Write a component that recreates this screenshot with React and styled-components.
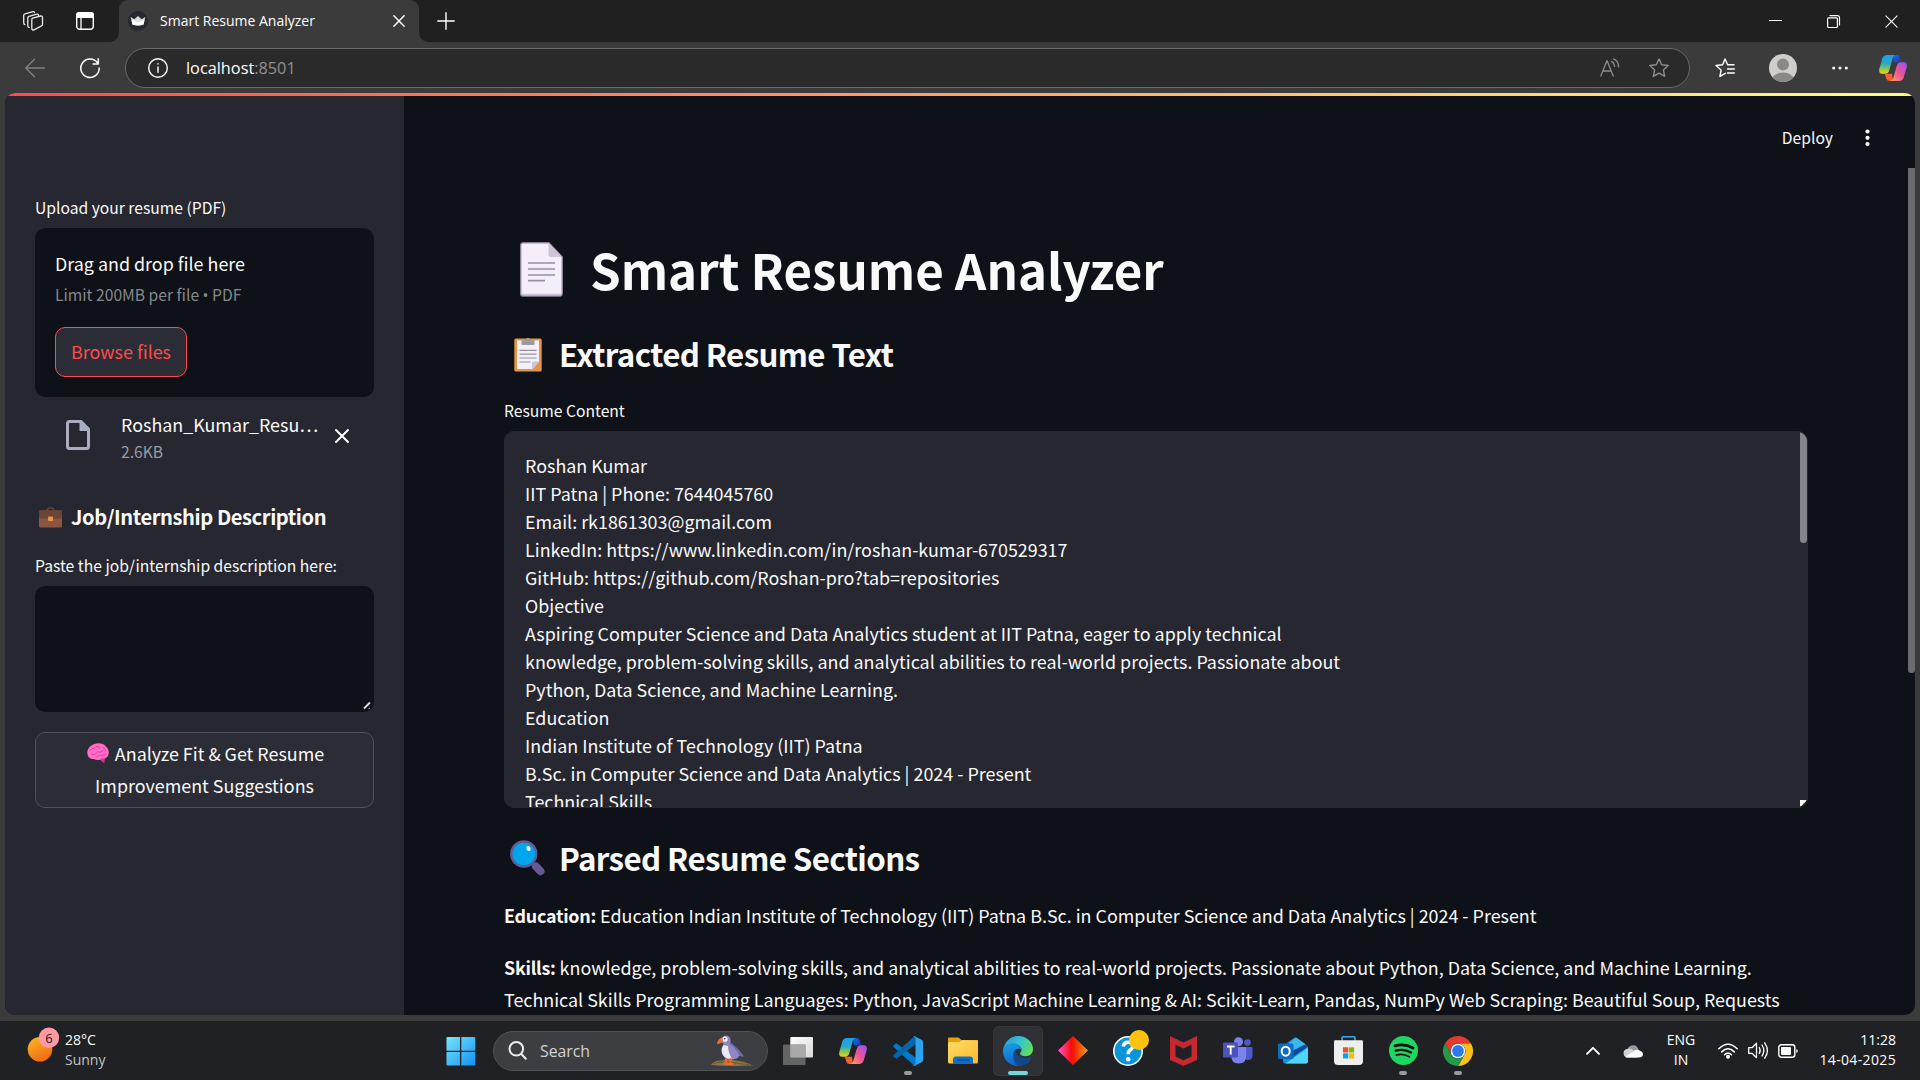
import React from "react";
import styled, { createGlobalStyle } from "styled-components";

const GlobalStyle = createGlobalStyle`
  * { box-sizing: border-box; }
  html, body { margin: 0; padding: 0; background: #202024; overflow: hidden; }
  p, h1, h2, h3 { margin: 0; }
`;

const sans = `"Noto Sans CJK SC", "Noto Sans", sans-serif`;
const ui = `"Open Sans", "Noto Sans", sans-serif`;

const Screen = styled.div`
  width: 1920px;
  height: 1080px;
  display: flex;
  flex-direction: column;
  background: #3b3b3b;
  font-family: ${ui};
  color: #fff;
  overflow: hidden;
`;

const Icon = styled.svg`
  display: block;
  flex: none;
  overflow: visible;
`;

/* ---------- browser chrome ---------- */

const TabStrip = styled.div`
  height: 42px;
  flex: none;
  display: flex;
  align-items: center;
  background: #202020;
  padding-left: 22px;
`;
const StripTools = styled.div`
  width: 97px;
  display: flex;
  align-items: center;
  gap: 32px;
`;
const Tab = styled.div`
  position: relative;
  width: 300px;
  height: 42px;
  display: flex;
  align-items: center;
  padding: 0 14px 0 9px;
  gap: 12px;
  background: #3b3b3b;
  border-radius: 9px 9px 0 0;
  &::before, &::after {
    content: "";
    position: absolute;
    bottom: 0;
    width: 9px;
    height: 9px;
  }
  &::before {
    left: -9px;
    background: radial-gradient(circle at 0 0, #202020 8.5px, #3b3b3b 9px);
  }
  &::after {
    right: -9px;
    background: radial-gradient(circle at 9px 0, #202020 8.5px, #3b3b3b 9px);
  }
`;
const TabTitle = styled.span`
  flex: 1;
  font-size: 14px;
  line-height: 20px;
  white-space: nowrap;
  padding-bottom: 1px;
`;
const NewTab = styled.div`
  margin-left: 18px;
  flex: 1;
`;
const WindowButtons = styled.div`
  display: flex;
  align-items: center;
  gap: 45px;
  padding-right: 22px;
`;

const Toolbar = styled.div`
  height: 51px;
  flex: none;
  display: flex;
  align-items: center;
  padding: 0 13px 0 25px;
`;
const NavIcons = styled.div`
  display: flex;
  width: 100px;
  gap: 35px;
`;
const AddressBar = styled.div`
  width: 1565px;
  height: 40px;
  display: flex;
  align-items: center;
  border: 1px solid #6a6a6a;
  border-radius: 20px;
  background: #2a2a2a;
  padding: 0 20px 0 22px;
`;
const Url = styled.span`
  flex: 1;
  margin-left: 18px;
  font-size: 16.3px;
  line-height: 24px;
  padding-top: 1px;
  span { color: #8f8f8f; }
`;
const AddressActions = styled.div`
  display: flex;
  gap: 29px;
`;
const ToolbarActions = styled.div`
  flex: 1;
  display: grid;
  grid-template-columns: 54px 63px 47px 28px;
  align-items: center;
  padding-left: 25px;
`;

/* ---------- page ---------- */

const Page = styled.div`
  width: 1910px;
  height: 922px;
  flex: none;
  margin-left: 5px;
  border-radius: 10px;
  overflow: hidden;
  display: flex;
  flex-direction: column;
  background: #0e1117;
  font-family: ${sans};
  color: #fafafa;
`;
const Decoration = styled.div`
  height: 3px;
  flex: none;
  background: linear-gradient(90deg, #ff4b4b, #fffd80);
`;
const PageBody = styled.div`
  flex: 1;
  display: flex;
  min-height: 0;
`;
const Sidebar = styled.aside`
  width: 399px;
  flex: none;
  background: #262730;
  padding: 99px 30px 0;
`;
const Label = styled.div`
  padding-top: 1px;
  font-size: 15.67px;
  line-height: 24px;
  white-space: nowrap;
  margin-bottom: 8px;
`;
const Dropzone = styled.div`
  height: 169px;
  padding: 19px 20px 20px;
  border-radius: 10px;
  background: #0e1117;
`;
const DropTitle = styled.div`
  font-size: 17.9px;
  line-height: 32px;
`;
const Hint = styled.div`
  margin-top: 4px;
  font-size: 15.67px;
  line-height: 24px;
  color: #86888b;
`;
const Bullet = styled.span`
  font-family: "Open Sans", sans-serif;
  line-height: 1;
`;
const Button = styled.button`
  display: flex;
  flex-direction: column;
  align-items: center;
  width: ${(p) => p.$width};
  height: ${(p) => p.$height};
  margin: ${(p) => p.$top} 0 0;
  padding: ${(p) => p.$pad} 0 0;
  border: 1px solid ${(p) => (p.$active ? "#ff4b4b" : "#50515a")};
  border-radius: 10px;
  background: #2b2c36;
  color: ${(p) => (p.$active ? "#ff4b4b" : "#fafafa")};
  font-family: ${sans};
  font-size: 17.9px;
  line-height: 32px;
  white-space: nowrap;
`;
const ButtonLine = styled.span`
  display: flex;
  align-items: center;
  gap: 6px;
  padding-left: ${(p) => p.$shift || "0"};
`;
const FileRow = styled.div`
  display: flex;
  align-items: flex-start;
  margin-top: 11px;
  padding: 0 24px 0 31px;
`;
const FileIconBox = styled.div`
  width: 55px;
  padding-top: 12px;
`;
const FileText = styled.div`
  width: 214px;
  flex: none;
`;
const FileName = styled.div`
  font-size: 17.9px;
  line-height: 32px;
  white-space: nowrap;
`;
const FileSize = styled.div`
  margin-top: 2px;
  font-size: 15.67px;
  line-height: 20px;
  color: #9a9ba0;
`;
const RemoveBox = styled.div`
  padding-top: 21px;
`;
const SideHeading = styled.h3`
  display: flex;
  align-items: center;
  gap: 9px;
  margin: 41px 0 22px;
  padding-left: 4px;
  font-size: 20.1px;
  line-height: 28px;
  font-weight: 600;
  letter-spacing: -0.41px;
  white-space: nowrap;
`;
const JobInput = styled.div`
  height: 126px;
  display: flex;
  align-items: flex-end;
  justify-content: flex-end;
  padding: 2px;
  border-radius: 10px;
  background: #0e1117;
`;

const Main = styled.main`
  position: relative;
  flex: 1;
  min-width: 0;
  overflow: hidden;
`;
const Header = styled.header`
  height: 82px;
  display: flex;
  align-items: center;
  justify-content: flex-end;
  gap: 31px;
  padding: 2px 44px 0 0;
  font-size: 15.67px;
  line-height: 24px;
`;
const Content = styled.div`
  width: 1304px;
  margin: 58px 0 0 100px;
`;
const Title = styled.h1`
  display: flex;
  align-items: center;
  height: 66px;
  padding-left: 16px;
  gap: 27px;
  font-size: 49.2px;
  line-height: 66px;
  font-weight: 700;
  white-space: nowrap;
`;
const Heading = styled.h2`
  display: flex;
  align-items: center;
  height: 42px;
  margin: ${(p) => p.$margin};
  font-size: 31.3px;
  line-height: 42px;
  font-weight: 600;
  letter-spacing: -0.62px;
  white-space: nowrap;
`;
const HeadingIcon = styled.span`
  width: 55px;
  padding-left: ${(p) => p.$inset};
`;
const ResumeBox = styled.div`
  position: relative;
  height: 377px;
  padding: 19px 20px 0;
  border: 1px solid #262730;
  border-radius: 10px;
  background: #262730;
  overflow: hidden;
  font-size: 17.9px;
  line-height: 28px;
  white-space: pre;
`;
const Thumb = styled.div`
  position: absolute;
  right: 0;
  top: ${(p) => p.$top};
  width: 7px;
  height: ${(p) => p.$height};
  border-radius: ${(p) => p.$radius};
  background: ${(p) => p.$color};
`;
const Corner = styled.div`
  position: absolute;
  right: 0;
  bottom: 0;
  width: 7px;
  height: 7px;
`;
const Para = styled.p`
  margin-bottom: 20px;
  font-size: 17.9px;
  line-height: 32px;
  white-space: nowrap;
  b { font-weight: 700; letter-spacing: -0.25px; }
`;

/* ---------- taskbar ---------- */

const Taskbar = styled.footer`
  height: 59px;
  flex: none;
  margin-top: 6px;
  display: flex;
  align-items: center;
  background: #202125;
`;
const Weather = styled.div`
  width: 436px;
  display: flex;
  align-items: center;
  gap: 6px;
  padding-left: 27px;
`;
const Lines = styled.div`
  width: ${(p) => p.$width || "auto"};
  text-align: ${(p) => p.$align || "left"};
  padding-bottom: 2px;
  font-size: 14px;
  line-height: 20px;
  white-space: nowrap;
`;
const Dim = styled.div`
  color: #c4c4c6;
`;
const DateText = styled.div`
  letter-spacing: 0.35px;
`;
const Cell = styled.div`
  position: relative;
  width: 50px;
  height: 50px;
  flex: none;
  display: flex;
  align-items: center;
  justify-content: center;
  border-radius: 6px;
  background: ${(p) => (p.$active ? "#303135" : "transparent")};
  box-shadow: ${(p) => (p.$active ? "inset 0 0 0 1px #37383c" : "none")};
  &::after {
    content: "";
    position: absolute;
    bottom: 1px;
    width: ${(p) => (p.$active ? "20px" : p.$running ? "8px" : "0")};
    height: 4px;
    border-radius: 2px;
    background: ${(p) => (p.$active ? "#76d6dc" : "#9a9a9d")};
  }
`;
const SearchBox = styled.div`
  width: 275px;
  height: 40px;
  margin: 0 5px 0 7px;
  display: flex;
  align-items: center;
  padding: 0 14px 0 14px;
  border: 1px solid #505155;
  border-radius: 20px;
  background: #3d3e42;
`;
const SearchText = styled.span`
  flex: 1;
  margin-left: 13px;
  color: #d2d2d4;
  font-size: 15.8px;
  line-height: 24px;
`;
const Apps = styled.div`
  display: flex;
  gap: 5px;
`;
const Tray = styled.div`
  flex: 1;
  display: flex;
  align-items: center;
  justify-content: flex-end;
  padding-right: 24px;
`;
const TrayGap = styled.div`
  width: ${(p) => p.$w};
  flex: none;
`;

const line = (w = 1.3, c = "#fff") => ({
  fill: "none",
  stroke: c,
  strokeWidth: w,
  strokeLinecap: "round",
  strokeLinejoin: "round",
});

const Workspaces = () => (
  <Icon width="22" height="22" viewBox="0 0 22 22" {...line(1.3, "#e8e8e8")}>
    <path d="M10.6 8.2 18.8 6c.9-.2 1.7.4 1.7 1.300v7.200c0 .7-.4 1.200-1 1.400l-7.500 3.900c-1 .5-2.200 0-2.200-1.300V9.500c0-.6.2-1.100.8-1.300Z" />
    <path d="M16.500 5.500c0-1-.8-1.600-1.700-1.300L7 6.300c-.7.200-1.200.8-1.200 1.500v8.300c0 .8.600 1.300 1.300 1.300" />
    <path d="M12.500 2.600c-.1-.8-.8-1.200-1.600-1L3 3.900c-.8.200-1.300.8-1.300 1.600v7.600c0 .8.500 1.300 1.200 1.400" />
  </Icon>
);
const VerticalTabs = () => (
  <Icon width="18" height="18" viewBox="0 0 18 18">
    <rect x=".7" y=".7" width="16.600" height="16.600" rx="3" {...line(1.4)} />
    <path d="M0 6V3a3 3 0 0 1 3-3h12a3 3 0 0 1 3 3v3Z" fill="#fff" />
    <path d="M5 5v12" {...line(1.3)} />
  </Icon>
);
const Crown = () => (
  <Icon width="20" height="20" viewBox="0 0 20 20">
    <circle cx="10" cy="10" r="10" fill="#262730" />
    <path d="M2.600 6 6.300 8.200 10 5l3.700 3.200L17.400 6 15.500 13.500Q10 15.500 4.500 13.500Z" fill="#dcdcdc" />
    <path d="M3.500 9 10 11l6.500-2-1 4.500Q10 15.500 4.500 13.500Z" fill="#fff" />
  </Icon>
);
const Cross = ({ size, w = 1.4 }) => (
  <Icon width={size} height={size} viewBox="0 0 14 14" {...line(w)}>
    <path d="m1 1 12 12M13 1 1 13" />
  </Icon>
);

const Copilot = ({ id }) => (
  <Icon width="28" height="26" viewBox="0 0 28 26">
    <defs>
      <linearGradient id={id + "a"} x1="0" y1="0" x2="0" y2="1">
        <stop offset="0" stopColor="#1f9df0" /><stop offset=".45" stopColor="#2aa8c8" />
        <stop offset=".75" stopColor="#8cc84a" /><stop offset="1" stopColor="#f5d30c" />
      </linearGradient>
      <linearGradient id={id + "b"} x1="1" y1="0" x2="0" y2="1">
        <stop offset="0" stopColor="#8f55f5" /><stop offset=".5" stopColor="#ec5299" />
        <stop offset="1" stopColor="#ffa25a" />
      </linearGradient>
      <linearGradient id={id + "c"} x1="0" y1="0" x2="1" y2="1">
        <stop offset="0" stopColor="#1a6fe0" /><stop offset="1" stopColor="#1636b8" />
      </linearGradient>
    </defs>
    <path d="M14 0h3.500c1.500 0 2.600.8 3.100 2.200l1.600 5H15Z" fill={`url(#${id}c)`} />
    <path d="M14 26h-3.500c-1.500 0-2.600-.8-3.100-2.200l-1.600-5H13Z" fill="#f4602f" />
    <path d="M8 0h8.500c-1.500.4-2.300 1.500-2.800 3.200L10.300 15c-.7 2.500-1.800 3.800-4.200 3.800H3.200C.8 18.800-.4 16.800.2 14.300L3.300 3.500C4 1.200 5.500 0 8 0Z" fill={`url(#${id}a)`} />
    <path d="M20 26h-8.500c1.500-.4 2.300-1.500 2.800-3.200L17.700 11c.7-2.500 1.800-3.800 4.200-3.800h2.900c2.400 0 3.600 2 3 4.500l-3.100 10.800C24 24.800 22.500 26 20 26Z" fill={`url(#${id}b)`} />
  </Icon>
);

const ReadAloud = () => (
  <Icon width="20" height="19" viewBox="0 0 20 19" {...line(1.3, "#8c8c8c")}>
    <path d="M.8 18 7 2.500 13.200 18M3 13h8" />
    <path d="M11.500 3.600c2 .8 3 2.600 3 5M13.500.9c3.300 1.300 5.100 4.300 5.100 8" />
  </Icon>
);
const star = "M10 .9 12.700 6.700 19.200 7.500 14.400 12 15.700 18.400 10 15.200 4.300 18.400 5.600 12 .8 7.500 7.300 6.700Z";
const Star = () => (
  <Icon width="20" height="20" viewBox="0 0 20 20" {...line(1.4, "#8c8c8c")}><path d={star} /></Icon>
);
const Favorites = () => (
  <Icon width="20" height="20" viewBox="0 0 20 20" {...line(1.4)}>
    <path d="M10.300 15.300 4.900 18.400 6.100 12 1 7.500 7.600 6.700 10 1 12.600 6.700H19M12.500 11H19.300M12.500 15H19.300" />
  </Icon>
);
const Avatar = () => (
  <Icon width="28" height="28" viewBox="0 0 28 28">
    <defs><clipPath id="av"><circle cx="14" cy="14" r="14" /></clipPath></defs>
    <g clipPath="url(#av)">
      <rect width="28" height="28" fill="#d0cdca" />
      <circle cx="14" cy="10.500" r="6" fill="#8c8885" />
      <ellipse cx="14" cy="25" rx="10.500" ry="6.500" fill="#8c8885" />
    </g>
  </Icon>
);

/* ---------- emoji drawings ---------- */

const PageEmoji = () => (
  <Icon width="43" height="55" viewBox="0 0 43 55">
    <path d="M3 .8h26L42.200 15v36.500c0 1.500-1 2.500-2.500 2.500H3C1.600 54 .8 53 .8 51.700V3C.8 1.700 1.600.8 3 .8Z" fill="#f3eef8" stroke="#9b8fa5" strokeWidth="1.300" />
    <path d="M28.500 1 42.200 15H31c-1.500 0-2.500-1-2.500-2.500Z" fill="#cdc4d6" />
    <path d="M8 21h27M8 27h27M8 33h27M8 38.700h17" stroke="#998fa3" strokeWidth="1.700" />
    <path d="M2 52.500h39" stroke="#cdc4d6" strokeWidth="1.500" />
  </Icon>
);
const ClipboardEmoji = () => (
  <Icon width="28" height="36" viewBox="0 0 28 36">
    <rect x=".3" y="2.500" width="27.400" height="33" rx="1.500" fill="#e19747" />
    <path d="M3 4.500h22v21L18.500 33H4Q3 33 3 32Z" fill="#f3eef8" />
    <path d="M25 25.500h-5.500q-1.500 0-1.500 1.500v6.500Z" fill="#cdc4d6" />
    <path d="M7.500 8V5.500q0-2 2.500-2h1.700a2.400 2.400 0 0 1 4.600 0H18q2.500 0 2.500 2V8q0 1-1 1h-11q-1 0-1-1Z" fill="#9b9b9b" />
    <circle cx="14" cy="3" r="1" fill="#c98a45" />
    <path d="M5.500 14.300h17M5.500 18.200h17M5.500 22h17M5.500 26h11" stroke="#998fa3" strokeWidth="1.200" />
  </Icon>
);
const MagnifierEmoji = () => (
  <Icon width="35" height="36" viewBox="0 0 35 36">
    <path d="M20.500 21.500 30 31" stroke="#635994" strokeWidth="4" />
    <path d="m26 26.500 4.500 4.700" stroke="#635994" strokeWidth="8" strokeLinecap="round" />
    <circle cx="13.800" cy="14" r="12.500" fill="#00a6ed" stroke="#635994" strokeWidth="2.400" />
    <ellipse cx="18.500" cy="8.500" rx="2" ry="2.600" fill="#fff" transform="rotate(-20 18.500 8.500)" />
  </Icon>
);
const BriefcaseEmoji = () => (
  <Icon width="23" height="21" viewBox="0 0 23 21">
    <path d="M8 4C8 1.800 9.200.8 11.500.8S15 1.800 15 4" {...line(1.2, "#6d4534")} />
    <rect x="0" y="3.500" width="23" height="17" rx="1" fill="#8c5543" />
    <path d="M1 3.500h21q1 0 1 1V10q0 1.500-1.500 1.500h-20Q0 11.500 0 10V4.500q0-1 1-1Z" fill="#6d4534" />
    <rect x="9" y="9.500" width="5" height="4.500" rx=".8" fill="#e19747" />
  </Icon>
);
const BrainEmoji = () => (
  <Icon width="22" height="20" viewBox="0 0 22 20">
    <path d="M12 15.500 17.800 14.500 17.500 20Q14.500 19 13.500 17Z" fill="#e6279a" />
    <path d="M9.500.5C13 -.2 17 .8 18.800 3.500 21.500 5.500 22.500 9 21.300 12 20.300 15 17.500 16 15 15.500 12.500 17.500 9 17.500 7 16 3.500 16.300.5 14 .5 11-.5 6.500 3 1.500 9.500.5Z" fill="#ff6dc6" />
    <path d="M3 7.500Q5 5 8 5M9 3.500Q12 3 13 5M5 11.500q3 .5 4.500-1.500M11 9q3 1.500 5-1.500M13 12.500q3 .5 5-1.500M16 4.500q2 .5 2.500 2.500M9.500 14q1.500-.3 2-1.800" {...line(.9, "#ec2fa2")} />
  </Icon>
);

/* ---------- taskbar drawings ---------- */

const WeatherIcon = () => (
  <Icon width="32" height="47" viewBox="0 0 32 47">
    <defs>
      <linearGradient id="sun" x1=".2" y1="0" x2=".7" y2="1">
        <stop offset="0" stopColor="#f9b42a" /><stop offset="1" stopColor="#f2660f" />
      </linearGradient>
    </defs>
    <circle cx="13" cy="22.300" r="12.300" fill="url(#sun)" />
    <circle cx="22" cy="10.700" r="10.200" fill="#ff99a4" />
    <text x="22" y="15.500" textAnchor="middle" fontSize="13" fontFamily="Open Sans" fill="#1a1a1a">6</text>
  </Icon>
);
const WindowsLogo = () => (
  <Icon width="30" height="30" viewBox="0 0 30 30">
    <defs>
      <linearGradient id="win" gradientUnits="userSpaceOnUse" x1="0" y1="0" x2="30" y2="30">
        <stop offset="0" stopColor="#7be8fd" /><stop offset="1" stopColor="#0d90f2" />
      </linearGradient>
    </defs>
    <path d="M.5 2q0-1 1-1H14v13.700H.5ZM15.300 1h13q1 0 1 1v12.700h-14ZM.5 16H14v13.500H1.500q-1 0-1-1ZM15.300 16h14v12.500q0 1-1 1h-13Z" fill="url(#win)" />
  </Icon>
);
const SearchIcon = () => (
  <Icon width="19" height="19" viewBox="0 0 19 19" {...line(2, "#ececec")}>
    <circle cx="8.300" cy="7.800" r="6.800" /><path d="m13.300 13 4.500 4.700" />
  </Icon>
);
const Puffin = () => (
  <Icon width="42" height="31" viewBox="0 0 42 31">
    <path d="M0 30Q3 25 11 25.500 17 22.500 24 25.500 33 26 42 30.500Q20 31.500 0 30Z" fill="#8d7448" />
    <path d="M3 28.500Q10 26 20 27.500T38 29.500" {...line(1, "#6b5836")} />
    <path d="M15 0.500C19 .8 20 4 19.500 8 24 11 29 16 33 21.500L28 21Q27 24 21 24.500C13 24.500 9.500 19 10.500 13.500 11 11.500 12.500 10.500 12.500 8.500Q10 7 10.500 3.500 12 .5 15 .5Z" fill="#8f86c2" />
    <path d="M12.500 10C9.500 14 10.500 21 16 23.500L21 24Q17 17 17 11Z" fill="#ece9f6" />
    <path d="M18 9Q24 12 28.500 20.500L32.500 21.500Q28 14 20 8Z" fill="#7067ae" />
    <circle cx="14" cy="4.200" r="2.600" fill="#f3f1fa" /><circle cx="13.800" cy="3.800" r=".8" fill="#2b2540" />
    <path d="M11.300 2.500Q6.500 3.500 6 9 8.500 9.500 11.800 7Z" fill="#f26a2b" />
    <path d="M15 24v4M19.500 24v4M13 28.500h4M17.500 29h4" {...line(2, "#f26a2b")} />
  </Icon>
);
const TaskView = () => (
  <Icon width="30" height="28" viewBox="0 0 30 28">
    <defs><linearGradient id="tv" x1="0" y1="0" x2="1" y2="1"><stop offset="0" stopColor="#fff" /><stop offset="1" stopColor="#d8d8d8" /></linearGradient></defs>
    <rect x="7.300" y="0" width="22.700" height="20.500" rx="1" fill="url(#tv)" />
    <rect x="0" y="7.500" width="22.500" height="20.500" rx="1" fill="#707070" fillOpacity=".85" />
    <path d="M7.300 7.500h15.200v13H7.300Z" fill="#a9a9a9" />
  </Icon>
);
const VsCode = () => (
  <Icon width="30" height="30" viewBox="0 0 30 30">
    <path d="M.6 9.300 2.400 7.700q.8-.7 1.700 0L23 22v7.500Q21.500 30 20.500 29L.6 10.900q-.9-.8 0-1.600Z" fill="#0179cb" />
    <path d="M.6 20.700 2.400 22.300q.8.700 1.700 0L23 8V.5Q21.500 0 20.500 1L.6 19.100q-.9.800 0 1.600Z" fill="#0566a8" />
    <path d="M21.500.3 29 3.900q1 .5 1 1.500v19.200q0 1-1 1.500l-7.500 3.600q-1 .4-1.700-.5 2.700.6 2.700-2.200V3q0-2.800-2.700-2.200.7-.9 1.700-.5Z" fill="#2ba3ee" />
  </Icon>
);
const Explorer = () => (
  <Icon width="30" height="27" viewBox="0 0 30 27">
    <defs><linearGradient id="fx" x1="0" y1="0" x2="1" y2="1"><stop offset="0" stopColor="#ffdb68" /><stop offset="1" stopColor="#fcb92c" /></linearGradient></defs>
    <path d="M0 1.500Q0 .5 1 .5h9.500L13.500 3H29q1 0 1 1v6H0Z" fill="#e3a008" />
    <path d="M0 6.500Q0 5 1.500 5H11l3-1.700H29q1 0 1 1V25q0 1.500-1.500 1.500h-27Q0 26.500 0 25Z" fill="url(#fx)" />
    <path d="M5 27v-4.500Q5 19.500 8 19.500H22q3 0 3 3V27Z" fill="#0f6fc8" />
    <path d="M9.500 23h11" {...line(1.2, "#0a3f7c")} />
  </Icon>
);
const Edge = () => (
  <Icon width="30" height="30" viewBox="0 0 30 30">
    <defs>
      <linearGradient id="e1" x1="0" y1=".3" x2="1" y2=".7"><stop offset="0" stopColor="#2b9fe0" /><stop offset=".5" stopColor="#35c3cf" /><stop offset="1" stopColor="#66e248" /></linearGradient>
      <linearGradient id="e2" x1="0" y1="0" x2=".4" y2="1"><stop offset="0" stopColor="#1c9fe6" /><stop offset="1" stopColor="#0b66c3" /></linearGradient>
    </defs>
    <path d="M.2 14C1.300 6 7.500 0 15 0 24 0 30 6.500 30 13c0 4.700-3.300 7.200-7.500 7.200-3.500 0-5.500-1.300-5.500-2.700 0-.9 1.500-1.500 1.500-3.700C18.500 10.300 15 8 11 8 6 8 2 10 .2 14Z" fill="url(#e1)" />
    <path d="M0 15c0-5 5-7.800 10-7.800 4.500 0 8.300 2.800 8.500 6.600C15 11 11 14 11 18c0 5 5 8 10 7.500 2.500-.3 5-1.500 6.600-2.500C25 27.500 20.500 30 15 30 6.500 30 0 23.500 0 15Z" fill="url(#e2)" />
    <path d="M10.300 20.500C9.800 16 12 13.300 14.300 12.700 12.500 15 13 18.500 16 20.500c3.500 2 8 1.800 11 .6 1-.4 1.500.4.900 1.400C25 27 20 30 16 30c-3.500-.8-5.400-5-5.700-9.500Z" fill="#11478c" />
  </Icon>
);
const Diamond = () => (
  <Icon width="30" height="29" viewBox="0 0 30 29">
    <defs><linearGradient id="dm"><stop offset="0" stopColor="#ff5ad0" /><stop offset=".45" stopColor="#ff0808" /><stop offset="1" stopColor="#ffae08" /></linearGradient></defs>
    <path d="M15 0 30 14.500 15 29 0 14.500Z" fill="url(#dm)" />
    <path d="M15 0 30 14.500 15 29Z" fill="#000" fillOpacity=".06" />
  </Icon>
);
const Help = () => (
  <Icon width="30" height="30" viewBox="0 0 30 30">
    <circle cx="15" cy="15" r="14.200" fill="#0a95d8" stroke="#fff" strokeWidth="1.600" />
    <path d="M10.300 10.500Q10.800 6.200 15.300 6.300 19.800 6.500 19.700 10.300 19.600 12.500 17.200 14 15.200 15.300 15.200 18.300" fill="none" stroke="#fff" strokeWidth="3.600" />
    <circle cx="15.200" cy="23.300" r="2.300" fill="#fff" />
    <circle cx="26" cy="4" r="10" fill="#ffc20e" />
  </Icon>
);
const McAfee = () => (
  <Icon width="27" height="30" viewBox="0 0 27 30">
    <path d="M0 0 13.500 6.500 27 0V24L13.500 30 0 24ZM5.500 8.500V20.500L13.500 24.300 21.500 20.500V8.500L13.500 12.500Z" fill="#c3292f" fillRule="evenodd" />
  </Icon>
);
const Teams = () => (
  <Icon width="30" height="27" viewBox="0 0 30 27">
    <circle cx="24.500" cy="5.500" r="3.300" fill="#5059c9" />
    <path d="M20 10h8.500q1 0 1 1v7.500q0 4.500-4.500 4.500-4 0-5-3Z" fill="#5059c9" />
    <circle cx="15.500" cy="4.700" r="4.500" fill="#7b83eb" />
    <path d="M9.500 10H22q1.200 0 1.200 1.200V19q0 7.500-7.500 7.500T8.300 19v-8Z" fill="#7b83eb" />
    <rect x="0" y="5.500" width="15" height="15" rx="1.200" fill="#4a52bd" />
    <path d="M4 9.500h7.500M7.700 9.500v8" stroke="#fff" strokeWidth="1.900" />
  </Icon>
);
const Outlook = () => (
  <Icon width="30" height="27" viewBox="0 0 30 27">
    <path d="M5 9 16 1q1.500-1 3 0L30 9.500V24q0 2.500-2.500 2.500h-20Q5 26.500 5 24Z" fill="#1490df" />
    <path d="M11 6 17 1.200q1-.7 2 0l9 6.300L14 16Z" fill="#3bb8f0" />
    <path d="M27.500 7.300 30 9.500 12 22V15Z" fill="#0b4a9c" />
    <path d="M30 10.500V24q0 2.500-2.500 2.500H7.500Z" fill="#4fd5f7" />
    <rect x="0" y="6.500" width="15.500" height="15.500" rx="1.500" fill="#0f6cbd" />
    <ellipse cx="7.700" cy="14.200" rx="4" ry="4.500" fill="none" stroke="#fff" strokeWidth="2" />
  </Icon>
);
const Store = () => (
  <Icon width="29" height="29" viewBox="0 0 29 29">
    <path d="M8 6V2q0-1.200 1.200-1.200h10.600Q21 .8 21 2v4" fill="none" stroke="#2cb3ee" strokeWidth="1.600" />
    <path d="M0 5.500Q0 4.300 1.200 4.300h26.600Q29 4.300 29 5.500V25q0 4-4 4H4Q0 29 0 25Z" fill="#eeeeee" />
    <path d="M9 11.300h5.200v5.200H9Z" fill="#f25022" /><path d="M15 11.300h5.200v5.200H15Z" fill="#7fba00" />
    <path d="M9 17.300h5.200v5.200H9Z" fill="#00a4ef" /><path d="M15 17.300h5.200v5.200H15Z" fill="#ffb900" />
  </Icon>
);
const Spotify = () => (
  <Icon width="29" height="29" viewBox="0 0 29 29">
    <circle cx="14.500" cy="14.500" r="14.500" fill="#1fd660" />
    <path d="M6 9.800Q15.500 7 24 12" {...line(2.8, "#101010")} />
    <path d="M6.700 14.700Q15 12.300 22 16.500" {...line(2.3, "#101010")} />
    <path d="M7.300 19Q14.500 17.200 20.300 20.800" {...line(1.9, "#101010")} />
  </Icon>
);
const Chrome = () => (
  <Icon width="30" height="30" viewBox="0 0 30 30">
    <path d="M2 7.500A15 15 0 0 1 28 7.500H15A7.500 7.500 0 0 0 8.500 18.750Z" fill="#e33b2e" />
    <path d="M28 7.500A15 15 0 0 1 15 30L21.500 18.750A7.500 7.500 0 0 0 15 7.500Z" fill="#fbc116" />
    <path d="M15 30A15 15 0 0 1 2 7.500L8.500 18.750A7.500 7.500 0 0 0 21.500 18.750Z" fill="#279847" />
    <circle cx="15" cy="15" r="7.300" fill="#fff" /><circle cx="15" cy="15" r="5.900" fill="#2a7af0" />
  </Icon>
);

const apps = [
  [TaskView], [Copilot], [VsCode, "run"], [Explorer], [Edge, "active"], [Diamond], [Help],
  [McAfee], [Teams], [Outlook], [Store], [Spotify, "run"], [Chrome, "run"],
];

const resume = `Roshan Kumar
IIT Patna | Phone: 7644045760
Email: rk1861303@gmail.com
LinkedIn: https://www.linkedin.com/in/roshan-kumar-670529317
GitHub: https://github.com/Roshan-pro?tab=repositories
Objective
Aspiring Computer Science and Data Analytics student at IIT Patna, eager to apply technical
knowledge, problem-solving skills, and analytical abilities to real-world projects. Passionate about
Python, Data Science, and Machine Learning.
Education
Indian Institute of Technology (IIT) Patna
B.Sc. in Computer Science and Data Analytics | 2024 - Present
Technical Skills`;

export default function App() {
  return (
    <>
      <GlobalStyle />
      <Screen>
        <TabStrip>
          <StripTools><Workspaces /><VerticalTabs /></StripTools>
          <Tab>
            <Crown />
            <TabTitle>Smart Resume Analyzer</TabTitle>
            <Cross size="12" w={1.7} />
          </Tab>
          <NewTab>
            <Icon width="18" height="18" viewBox="0 0 18 18" {...line(1.4)}><path d="M9 .8v16.400M.8 9h16.400" /></Icon>
          </NewTab>
          <WindowButtons>
            <Icon width="13" height="13" viewBox="0 0 13 13"><path d="M0 5.500h13" stroke="#fff" /></Icon>
            <Icon width="13" height="13" viewBox="0 0 13 13" {...line(1.2)}>
              <rect x=".6" y="2.800" width="9.800" height="9.700" rx="1" /><path d="M3 .6h7.500a2 2 0 0 1 2 2V10" />
            </Icon>
            <Cross size="13" w={1.2} />
          </WindowButtons>
        </TabStrip>

        <Toolbar>
          <NavIcons>
            <Icon width="20" height="20" viewBox="0 0 20 20" {...line(1.3, "#808080")}><path d="M19.500 10H.8M9.500 1.300.8 10l8.700 8.700" /></Icon>
            <Icon width="20" height="20" viewBox="0 0 20 20" {...line(1.5)}><path d="M17.600 5A9.200 9.200 0 1 0 19.200 10M18.300.8V6h-5.200" /></Icon>
          </NavIcons>
          <AddressBar>
            <Icon width="20" height="20" viewBox="0 0 20 20" {...line(1.4)}><circle cx="10" cy="10" r="9.300" /><path d="M10 9v5.300M10 5.800v.2" /></Icon>
            <Url>localhost<span>:8501</span></Url>
            <AddressActions><ReadAloud /><Star /></AddressActions>
          </AddressBar>
          <ToolbarActions>
            <Favorites />
            <Avatar />
            <Icon width="16" height="4" viewBox="0 0 16 4" fill="#fff"><circle cx="1.700" cy="2" r="1.500" /><circle cx="8" cy="2" r="1.500" /><circle cx="14.300" cy="2" r="1.500" /></Icon>
            <Copilot id="top" />
          </ToolbarActions>
        </Toolbar>

        <Page>
          <Decoration />
          <PageBody>
            <Sidebar>
              <Label>Upload your resume (PDF)</Label>
              <Dropzone>
                <DropTitle>Drag and drop file here</DropTitle>
                <Hint>Limit 200MB per file <Bullet>•</Bullet> PDF</Hint>
                <Button $active $width="132px" $height="50px" $top="20px" $pad="7px">Browse files</Button>
              </Dropzone>
              <FileRow>
                <FileIconBox>
                  <Icon width="24" height="30" viewBox="0 0 24 30">
                    <path d="M3.500 1.500H15L22.500 9v17.500q0 2-2 2h-17q-2 0-2-2v-23q0-2 2-2Z" fill="none" stroke="#a9adc1" strokeWidth="3" />
                    <path d="M13.500 1v10H23L15 1Z" fill="#a9adc1" />
                  </Icon>
                </FileIconBox>
                <FileText>
                  <FileName>Roshan_Kumar_Resu…</FileName>
                  <FileSize>2.6KB</FileSize>
                </FileText>
                <RemoveBox><Cross size="14" w={2} /></RemoveBox>
              </FileRow>
              <SideHeading><BriefcaseEmoji />Job/Internship Description</SideHeading>
              <Label>Paste the job/internship description here:</Label>
              <JobInput>
                <Icon width="9" height="9" viewBox="0 0 9 9"><path d="M1 7.500 7 1.500" stroke="#e0e0e0" strokeWidth="1.800" /><path d="M5.500 7.300h1.500" stroke="#bbb" /></Icon>
              </JobInput>
              <Button $width="339px" $height="76px" $top="20px" $pad="4px">
                <ButtonLine $shift="2px"><BrainEmoji />Analyze Fit &amp; Get Resume</ButtonLine>
                <ButtonLine>Improvement Suggestions</ButtonLine>
              </Button>
            </Sidebar>

            <Main>
              <Header>
                <span>Deploy</span>
                <Icon width="7" height="18" viewBox="0 0 7 18" fill="#fafafa"><circle cx="3.500" cy="2.500" r="2.100" /><circle cx="3.500" cy="8.800" r="2.100" /><circle cx="3.500" cy="15.100" r="2.100" /></Icon>
              </Header>
              <Content>
                <Title><PageEmoji />Smart Resume Analyzer</Title>
                <Heading $margin="31px 0 23px"><HeadingIcon $inset="10px"><ClipboardEmoji /></HeadingIcon>Extracted Resume Text</Heading>
                <Label>Resume Content</Label>
                <ResumeBox>
                  {resume}
                  <Thumb $top="0" $height="111px" $radius="0 8px 4px 4px" $color="#85858b" />
                  <Corner><Icon width="7" height="7" viewBox="0 0 7 7"><path d="M0 0h7L5 2.500 2.500 5 0 7Z" fill="#fff" /><path d="M3 4.500 5 2.500" stroke="#555" strokeWidth=".8" /></Icon></Corner>
                </ResumeBox>
                <Heading $margin="29px 0 20px"><HeadingIcon $inset="6px"><MagnifierEmoji /></HeadingIcon>Parsed Resume Sections</Heading>
                <Para><b>Education:</b> Education Indian Institute of Technology (IIT) Patna B.Sc. in Computer Science and Data Analytics | 2024 - Present</Para>
                <Para>
                  <b>Skills:</b> knowledge, problem-solving skills, and analytical abilities to real-world projects. Passionate about Python, Data Science, and Machine Learning.<br />
                  Technical Skills Programming Languages: Python, JavaScript Machine Learning &amp; AI: Scikit-Learn, Pandas, NumPy Web Scraping: Beautiful Soup, Requests
                </Para>
              </Content>
              <Thumb $top="72px" $height="505px" $radius="0 0 3px 3px" $color="#6b6c70" />
            </Main>
          </PageBody>
        </Page>

        <Taskbar>
          <Weather>
            <WeatherIcon />
            <Lines><div>28°C</div><Dim>Sunny</Dim></Lines>
          </Weather>
          <Cell><WindowsLogo /></Cell>
          <SearchBox><SearchIcon /><SearchText>Search</SearchText><Puffin /></SearchBox>
          <Apps>
            {apps.map(([Glyph, state], i) => (
              <Cell key={i} $active={state === "active"} $running={state === "run"}><Glyph id="task" /></Cell>
            ))}
          </Apps>
          <Tray>
            <Icon width="14" height="9" viewBox="0 0 14 9" {...line(1.9)}><path d="m1 7.800 6-6 6 6" /></Icon>
            <TrayGap $w="23px" />
            <Icon width="20" height="14" viewBox="0 0 20 14">
              <path d="M4.500 7A5.500 5.500 0 0 1 15 4.500L17 9H5Z" fill="#9a9a9a" />
              <path d="M4.500 13.500A4.300 4.300 0 0 1 4 5Q8 3.500 11.500 7.500L14 13.500Z" fill="#d2d2d2" />
              <path d="M2.500 13Q6 10 10 7.500 13 4.500 16.500 6.500 20 7.500 20 10.500 19.700 13.500 16 13.500H4.500Q3.300 13.500 2.500 13Z" fill="#fff" />
            </Icon>
            <TrayGap $w="23px" />
            <Lines $width="30px" $align="center"><div>ENG</div><div>IN</div></Lines>
            <TrayGap $w="22px" />
            <Icon width="20" height="16" viewBox="0 0 20 16" {...line(1.5)}>
              <path d="M.8 5.800Q10-3.500 19.200 5.800M3.700 8.900Q10 2.500 16.300 8.900M6.500 11.700Q10 8.500 13.500 11.700" /><circle cx="10" cy="13.800" r="1.300" fill="#fff" />
            </Icon>
            <TrayGap $w="10px" />
            <Icon width="20" height="17" viewBox="0 0 20 17" {...line(1.3)}>
              <path d="M.7 5.700H4L8.500 1.300v14.400L4 11.300H.7ZM11.300 5.500q1.800 3 0 6M14 3q3.600 5.500 0 11M16.700.8q5.300 7.700 0 15.400" />
            </Icon>
            <TrayGap $w="10px" />
            <Icon width="20" height="14" viewBox="0 0 20 14">
              <rect x=".8" y=".8" width="16" height="12.400" rx="2.500" {...line(1.4)} /><rect x="3" y="3" width="10" height="8" rx="1" fill="#fff" /><path d="M18.300 5v4q1.500-.5 1.500-2t-1.500-2Z" fill="#fff" />
            </Icon>
            <TrayGap $w="20px" />
            <Lines $width="78px" $align="right"><div>11:28</div><DateText>14-04-2025</DateText></Lines>
          </Tray>
        </Taskbar>
      </Screen>
    </>
  );
}
